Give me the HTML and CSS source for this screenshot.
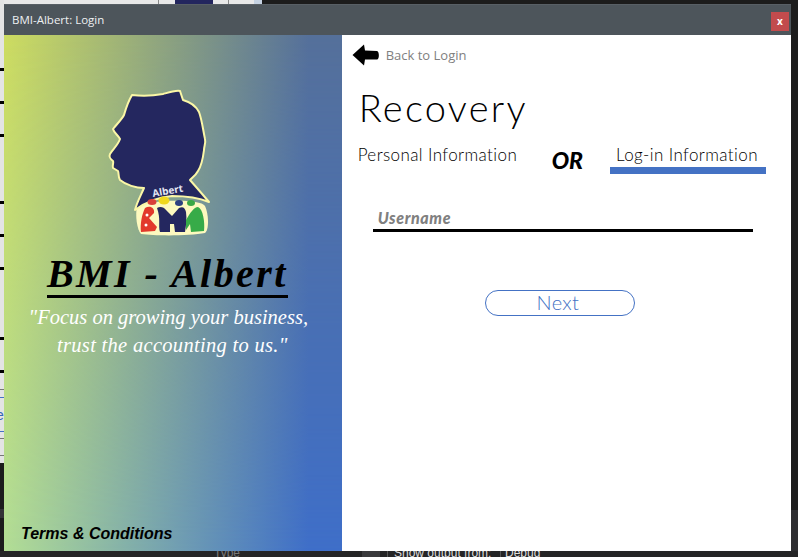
FILE: index.html
```html
<!DOCTYPE html>
<html lang="en">
<head>
<meta charset="utf-8">
<title>BMI-Albert: Login</title>
<link rel="stylesheet" href="styles.css">
</head>
<body>
<div class="desk" aria-hidden="true">
  <div class="desk-top"><span class="desk-heading">al Profile</span><i class="desk-navy"></i><i class="desk-sep desk-sep-a"></i><i class="desk-sep desk-sep-b"></i><i class="desk-blue"></i></div>
  <div class="desk-left">
    <i class="tick t1"></i><i class="tick t2"></i><i class="tick t3"></i><i class="tick t4"></i><i class="tick t5"></i><i class="tick t6"></i><i class="tick t7"></i><i class="tick t8"></i>
    <i class="dots d1"></i><i class="rule r1"></i><b class="desk-e">e</b><i class="rule r2"></i><i class="dots d2"></i><i class="dots d3"></i>
  </div>
  <div class="desk-strip"></div>
  <div class="desk-bottom"><span class="desk-type">Type</span><i class="desk-tab"></i><i class="desk-bar bar-a"></i><span class="desk-output">Show output from:</span><i class="desk-bar bar-b"></i><span class="desk-debug">Debug</span></div>
  <div class="desk-right"></div>
</div>

<main class="window">
  <header class="titlebar">
    <span class="title">BMI-Albert: Login</span>
    <button class="close" type="button">x</button>
  </header>
  <div class="body">
    <section class="brand">
      <svg class="logo" viewBox="106 88 106 150" width="106" height="150">
        <path class="logo-halo" d="M137 207 C146 200 200 198 205 206 C209 215 209 230 205 233 C190 236 155 236 141 234 C137 230 135 215 137 207 Z"/>
        <path class="logo-head" d="M132 95 C140 96 152 96 163 94 C170 92 176 90 180 91 C181 94 182 97 183 100 C190 102 196 106 199 112 C202 120 203 130 205 139 C206 143 204 146 204 150 C203 158 202 165 198 171 C196 175 193 177 190 180 C197 188 204 196 209 202 C197 197 186 196 172 196 C158 197 146 202 135 210 C137 202 141 195 144 188 C136 188 126 185 120 180 C118 177 119 173 118 171 L113 168 C112 165 114 163 113 161 C110 159 109 156 110 154 C113 149 118 145 120 139 C118 135 114 133 113 129 C117 124 122 119 124 115 C126 108 129 100 132 95 Z"/>
        <text class="logo-name" x="153" y="197" transform="rotate(-10 153 197)">Albert</text>
        <ellipse class="dot-red" cx="152" cy="202" rx="4.5" ry="3"/>
        <ellipse class="dot-yellow" cx="164" cy="200.500" rx="5.500" ry="4"/>
        <ellipse class="dot-navy" cx="179" cy="203" rx="4" ry="3"/>
        <ellipse class="dot-green" cx="191" cy="203" rx="4" ry="3"/>
        <path class="fig-red" d="M145 208 C150 205 155 208 154 213 L149 218 L157 227 L155 231 L141 232 C140 224 142 214 145 208 Z"/>
        <circle class="fig-spot" cx="147" cy="215" r="1.500"/><circle class="fig-spot" cx="146" cy="225" r="1.500"/>
        <path class="fig-navy" d="M157 208 C160 206 164 207 166 210 L172 216 L179 208 C183 206 185 208 186 212 C187 219 186 226 185 232 L175 232 L174 224 L170 224 L170 232 L160 232 C158 226 161 219 157 208 Z"/>
        <path class="fig-green" d="M186 220 C190 213 194 207 198 207 C203 209 205 222 204 231 L191 232 L190 224 L186 230 Z"/>
      </svg>
      <h1 class="brand-name">BMI - Albert</h1>
      <p class="tagline">"Focus on growing your business,<br><span class="tagline-second">trust the accounting to us."</span></p>
      <a class="terms">Terms &amp; Conditions</a>
    </section>
    <section class="form">
      <a class="back">
        <svg class="back-icon" viewBox="0 0 28 22" width="28" height="22"><path d="M12 0.500 L0.500 11 L12 21.500 L13 15.500 L25 15.500 C27.500 15.500 27.500 7.500 25 7 L13 6.500 Z"/></svg>
        <span>Back to Login</span>
      </a>
      <h2 class="heading">Recovery</h2>
      <div class="tabs">
        <span class="tab tab-first">Personal Information</span>
        <span class="or">OR</span>
        <span class="tab tab-active">Log-in Information</span>
      </div>
      <div class="field"><span class="field-label">Username</span></div>
      <button class="next" type="button">Next</button>
    </section>
  </div>
</main>
</body>
</html>
```

FILE: styles.css
```css
* { box-sizing: border-box; }
html, body { margin: 0; height: 100%; }
body { position: relative; width: 798px; height: 557px; overflow: hidden; background: #1c1c1c; font-family: "Lato", sans-serif; }

/* desktop showing behind the window */
.desk-top { position: absolute; left: 0; top: 0; width: 262px; height: 4px; background: #e8e8e8; overflow: hidden; }
.desk-heading { position: absolute; left: 3px; top: -24px; font: 24px/28px "Liberation Sans", sans-serif; color: #1a2a5a; white-space: nowrap; }
.desk-navy { position: absolute; left: 175px; top: 0; width: 38px; height: 4px; background: #23265e; }
.desk-sep { position: absolute; top: 0; width: 1px; height: 4px; background: #888; }
.desk-sep-a { left: 158px; }
.desk-sep-b { left: 228px; }
.desk-blue { position: absolute; left: 254px; top: 0; width: 8px; height: 4px; background: #c5d2e2; }
.desk-left { position: absolute; left: 0; top: 0; width: 4px; height: 463px; background: #e4e4e4; overflow: hidden; }
.tick { position: absolute; left: 0; width: 4px; height: 3px; background: #000; }
.t1 { top: 68px; } .t2 { top: 101px; } .t3 { top: 134px; } .t4 { top: 201px; }
.t5 { top: 234px; } .t6 { top: 267px; } .t7 { top: 337px; } .t8 { top: 370px; }
.dots { position: absolute; left: 0; width: 4px; height: 1px; background: #777; }
.d1 { top: 389px; } .d2 { top: 438px; } .d3 { top: 455px; }
.rule { position: absolute; left: 0; width: 4px; height: 1px; background: #4472c4; }
.r1 { top: 397px; } .r2 { top: 431px; }
.desk-e { position: absolute; left: -4px; top: 407px; font: 14px/16px "Liberation Sans", sans-serif; color: #3567b8; }
.desk-strip { position: absolute; left: 0; top: 509px; width: 4px; height: 9px; background: #333336; }
.desk-bottom { position: absolute; left: 0; top: 551px; width: 798px; height: 6px; background: #252526; overflow: hidden; color: #ddd; font: 12px/14px "Liberation Sans", sans-serif; }
.desk-type { position: absolute; left: 214px; top: -5px; color: #777; }
.desk-tab { position: absolute; left: 362px; top: 0; width: 18px; height: 6px; background: #3a3a3c; }
.desk-bar { position: absolute; top: 0; width: 1px; height: 6px; background: #555; }
.bar-a { left: 387px; }
.bar-b { left: 500px; }
.desk-output { position: absolute; left: 394px; top: -5px; }
.desk-debug { position: absolute; left: 505px; top: -5px; }
.desk-right { position: absolute; left: 791px; top: 510px; width: 7px; height: 41px; background: #2d2d30; }

/* window */
.window { position: absolute; left: 4px; top: 4px; width: 787px; height: 547px; display: flex; flex-direction: column; background: #fff; }
.titlebar { flex: none; height: 31px; display: flex; align-items: center; justify-content: space-between; padding: 0 2px 0 8px; background: #4d555b; border-top: 1px solid #585f65; }
.title { font: 11.500px/15px "Open Sans", sans-serif; color: #eef0f2; margin-top: -1px; }
.close { width: 18px; height: 19px; margin-top: 3px; padding: 0 0 2px; border: 0; background: #c24b4d; color: #fff; font: 700 10px/10px "Open Sans", sans-serif; }
.body { flex: 1; display: flex; min-height: 0; }

/* brand panel */
.brand { position: relative; width: 338px; display: flex; flex-direction: column; align-items: center; background: linear-gradient(to right, #b3de95 0%, #3f6fc9 90%, #3f6fc9 100%); }
.brand::before { content: ""; position: absolute; inset: 0; background: linear-gradient(to right, #cddc60 0%, #55709a 90%, #55709a 100%); -webkit-mask-image: linear-gradient(to bottom, #000 0%, transparent 100%); mask-image: linear-gradient(to bottom, #000 0%, transparent 100%); }
.brand > * { position: relative; }
.logo { display: block; margin: 53px 0 0 -28px; }
.logo-halo { fill: #fdf9bf; }
.logo-head { fill: #24275f; stroke: #fbf7a6; stroke-width: 2; stroke-linejoin: round; }
.logo-name { fill: #e4e6f2; font: 700 10px "Open Sans", sans-serif; }
.dot-red { fill: #d9403a; }
.dot-yellow { fill: #f0d81e; }
.dot-navy { fill: #2d3f80; }
.dot-green { fill: #3aa845; }
.fig-red { fill: #e2392b; }
.fig-spot { fill: #fff; }
.fig-navy { fill: #24275f; }
.fig-green { fill: #37ab48; }
.brand-name { margin: 14px 0 0 -11px; padding: 0; border-bottom: 3px solid #000; font: italic 700 40px/43px "Liberation Serif", serif; color: #000; white-space: nowrap; letter-spacing: 2.400px; }
.tagline { margin: 5px 0 0 -9px; font: italic 400 20.500px/28px "Liberation Serif", serif; color: #fff; text-align: center; white-space: nowrap; }
.tagline-second { margin-left: 8px; letter-spacing: 0.300px; }
.terms { margin-top: auto; margin-bottom: 8px; align-self: flex-start; margin-left: 17px; font: italic 700 16px/18px "Liberation Sans", sans-serif; color: #000; }

/* form panel */
.form { flex: 1; display: flex; flex-direction: column; padding: 9px 25px 0 10px; color: #000; }
.back { display: flex; align-items: center; gap: 6px; color: #808080; font: 400 13px/22px "Open Sans", sans-serif; }
.back-icon { fill: #000; flex: none; }
.heading { margin: 18px 0 0 7px; font: 300 38px/46px "Lato", sans-serif; letter-spacing: 2.300px; color: #000; }
.tabs { margin-top: 15px; display: flex; align-items: flex-start; padding-left: 6px; }
.tab { font: 300 17px/20px "Lato", sans-serif; letter-spacing: 0.400px; white-space: nowrap; }
.tab-first { width: 159px; }
.or { margin: 5px 27px 0 35px; font: italic 900 23px/20px "Lato", sans-serif; }
.tab-active { width: 156px; padding: 0 6px 2px; border-bottom: 7px solid #4472c4; }
.field { margin: 33px 13px 0 21px; padding-left: 5px; border-bottom: 3px solid #000; height: 25px; }
.field-label { font: italic 900 16px/22px "Lato", sans-serif; letter-spacing: 0.600px; color: #808080; }
.next { align-self: center; width: 150px; height: 26px; margin: 58px 0 0 2px; padding: 0 4px 2px 0; border: 1px solid #4472c4; border-radius: 13px; background: #fff; color: #4472c4; font: 300 20px/22px "Lato", sans-serif; letter-spacing: 0.300px; }
```
